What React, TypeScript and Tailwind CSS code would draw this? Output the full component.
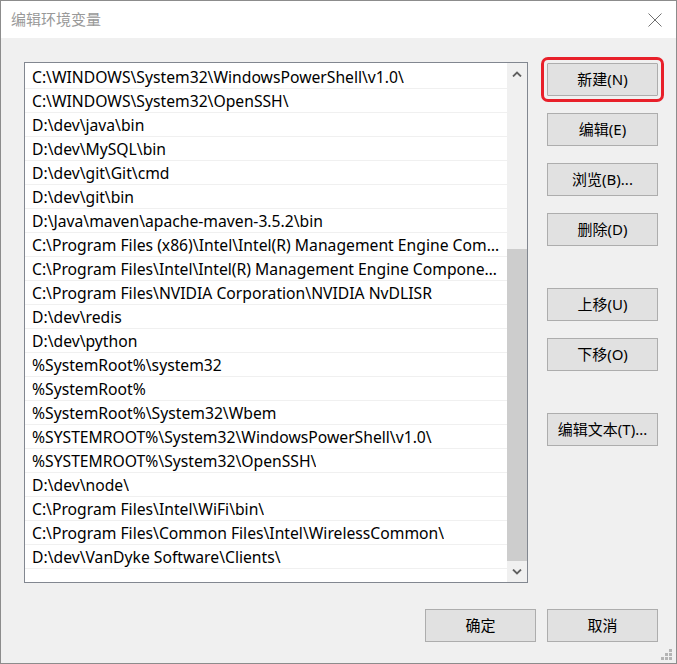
import React from "react";

const items = [
  "C:\\WINDOWS\\System32\\WindowsPowerShell\\v1.0\\",
  "C:\\WINDOWS\\System32\\OpenSSH\\",
  "D:\\dev\\java\\bin",
  "D:\\dev\\MySQL\\bin",
  "D:\\dev\\git\\Git\\cmd",
  "D:\\dev\\git\\bin",
  "D:\\Java\\maven\\apache-maven-3.5.2\\bin",
  "C:\\Program Files (x86)\\Intel\\Intel(R) Management Engine Components\\DAL",
  "C:\\Program Files\\Intel\\Intel(R) Management Engine Components\\DAL",
  "C:\\Program Files\\NVIDIA Corporation\\NVIDIA NvDLISR",
  "D:\\dev\\redis",
  "D:\\dev\\python",
  "%SystemRoot%\\system32",
  "%SystemRoot%",
  "%SystemRoot%\\System32\\Wbem",
  "%SYSTEMROOT%\\System32\\WindowsPowerShell\\v1.0\\",
  "%SYSTEMROOT%\\System32\\OpenSSH\\",
  "D:\\dev\\node\\",
  "C:\\Program Files\\Intel\\WiFi\\bin\\",
  "C:\\Program Files\\Common Files\\Intel\\WirelessCommon\\",
  "D:\\dev\\VanDyke Software\\Clients\\",
  "",
];

const font = {
  fontFamily: '"Noto Sans", "Noto Sans CJK SC", sans-serif',
};

function Btn({ label, className = "" }: { label: string; className?: string }) {
  return (
    <div
      className={`w-[111px] h-[33px] bg-[#e1e1e1] border border-[#adadad] flex items-center justify-center text-[15px] text-black ${className}`}
    >
      {label}
    </div>
  );
}

export default function App() {
  return (
    <div
      className="relative w-[677px] h-[664px] border border-[#8c8c8c] bg-[#f0f0f0] flex flex-col overflow-hidden"
      style={font}
    >
      <div className="h-[37px] bg-white flex items-center justify-between pl-[10px] pr-[14px] shrink-0">
        <span className="text-[15px] text-[#999999]">编辑环境变量</span>
        <svg width="14" height="14" viewBox="0 0 14 14">
          <path d="M0.5 0.5 L13.5 13.5 M13.5 0.5 L0.5 13.5" stroke="#707070" strokeWidth="1" />
        </svg>
      </div>
      <div className="flex-1 flex flex-col pt-[24px] pl-[23px] pr-[18px]">
        <div className="flex">
          <div className="w-[504px] h-[521px] border border-[#828790] bg-white flex">
            <div className="flex-1 flex flex-col overflow-hidden pt-[2px]">
              {items.map((t, i) => (
                <div
                  key={i}
                  className="h-[24px] shrink-0 border-b border-[#f0f0f0] flex items-center pt-[2px] pl-[7px] pr-[3px] text-[15.7px] text-black"
                >
                  <span className="block truncate whitespace-nowrap leading-[21px]">{t}</span>
                </div>
              ))}
            </div>
            <div className="w-[20px] bg-[#f0f0f0] flex flex-col shrink-0">
              <div className="h-[21px] flex items-center justify-center">
                <svg width="10" height="6" viewBox="0 0 10 6">
                  <path d="M1 5.5 L5 1.5 L9 5.5" stroke="#606060" strokeWidth="1.8" fill="none" />
                </svg>
              </div>
              <div className="flex-1 flex flex-col">
                <div className="h-[165px]" />
                <div className="flex-1 bg-[#cdcdcd]" />
              </div>
              <div className="h-[21px] flex items-center justify-center">
                <svg width="10" height="6" viewBox="0 0 10 6">
                  <path d="M1 0.5 L5 4.5 L9 0.5" stroke="#606060" strokeWidth="1.8" fill="none" />
                </svg>
              </div>
            </div>
          </div>
          <div className="ml-[19px] mt-[1px] flex flex-col">
            <Btn label="新建(N)" className="outline-[3px] outline-solid outline-[#e8202a] outline-offset-[3px] rounded-[1px]" />
            <Btn label="编辑(E)" className="mt-[17px]" />
            <Btn label="浏览(B)..." className="mt-[17px]" />
            <Btn label="删除(D)" className="mt-[17px]" />
            <Btn label="上移(U)" className="mt-[42px]" />
            <Btn label="下移(O)" className="mt-[17px]" />
            <Btn label="编辑文本(T)..." className="mt-[42px]" />
          </div>
        </div>
        <div className="mt-[26px] flex justify-end gap-[11px]">
          <Btn label="确定" />
          <Btn label="取消" />
        </div>
      </div>
      <svg className="absolute right-[4px] bottom-[3px]" width="11" height="11" viewBox="0 0 11 11">
        <rect x="8" y="0" width="3" height="3" fill="#b4b4b4" />
        <rect x="4" y="4" width="3" height="3" fill="#b4b4b4" />
        <rect x="8" y="4" width="3" height="3" fill="#b4b4b4" />
        <rect x="0" y="8" width="3" height="3" fill="#b4b4b4" />
        <rect x="4" y="8" width="3" height="3" fill="#b4b4b4" />
        <rect x="8" y="8" width="3" height="3" fill="#b4b4b4" />
      </svg>
    </div>
  );
}
